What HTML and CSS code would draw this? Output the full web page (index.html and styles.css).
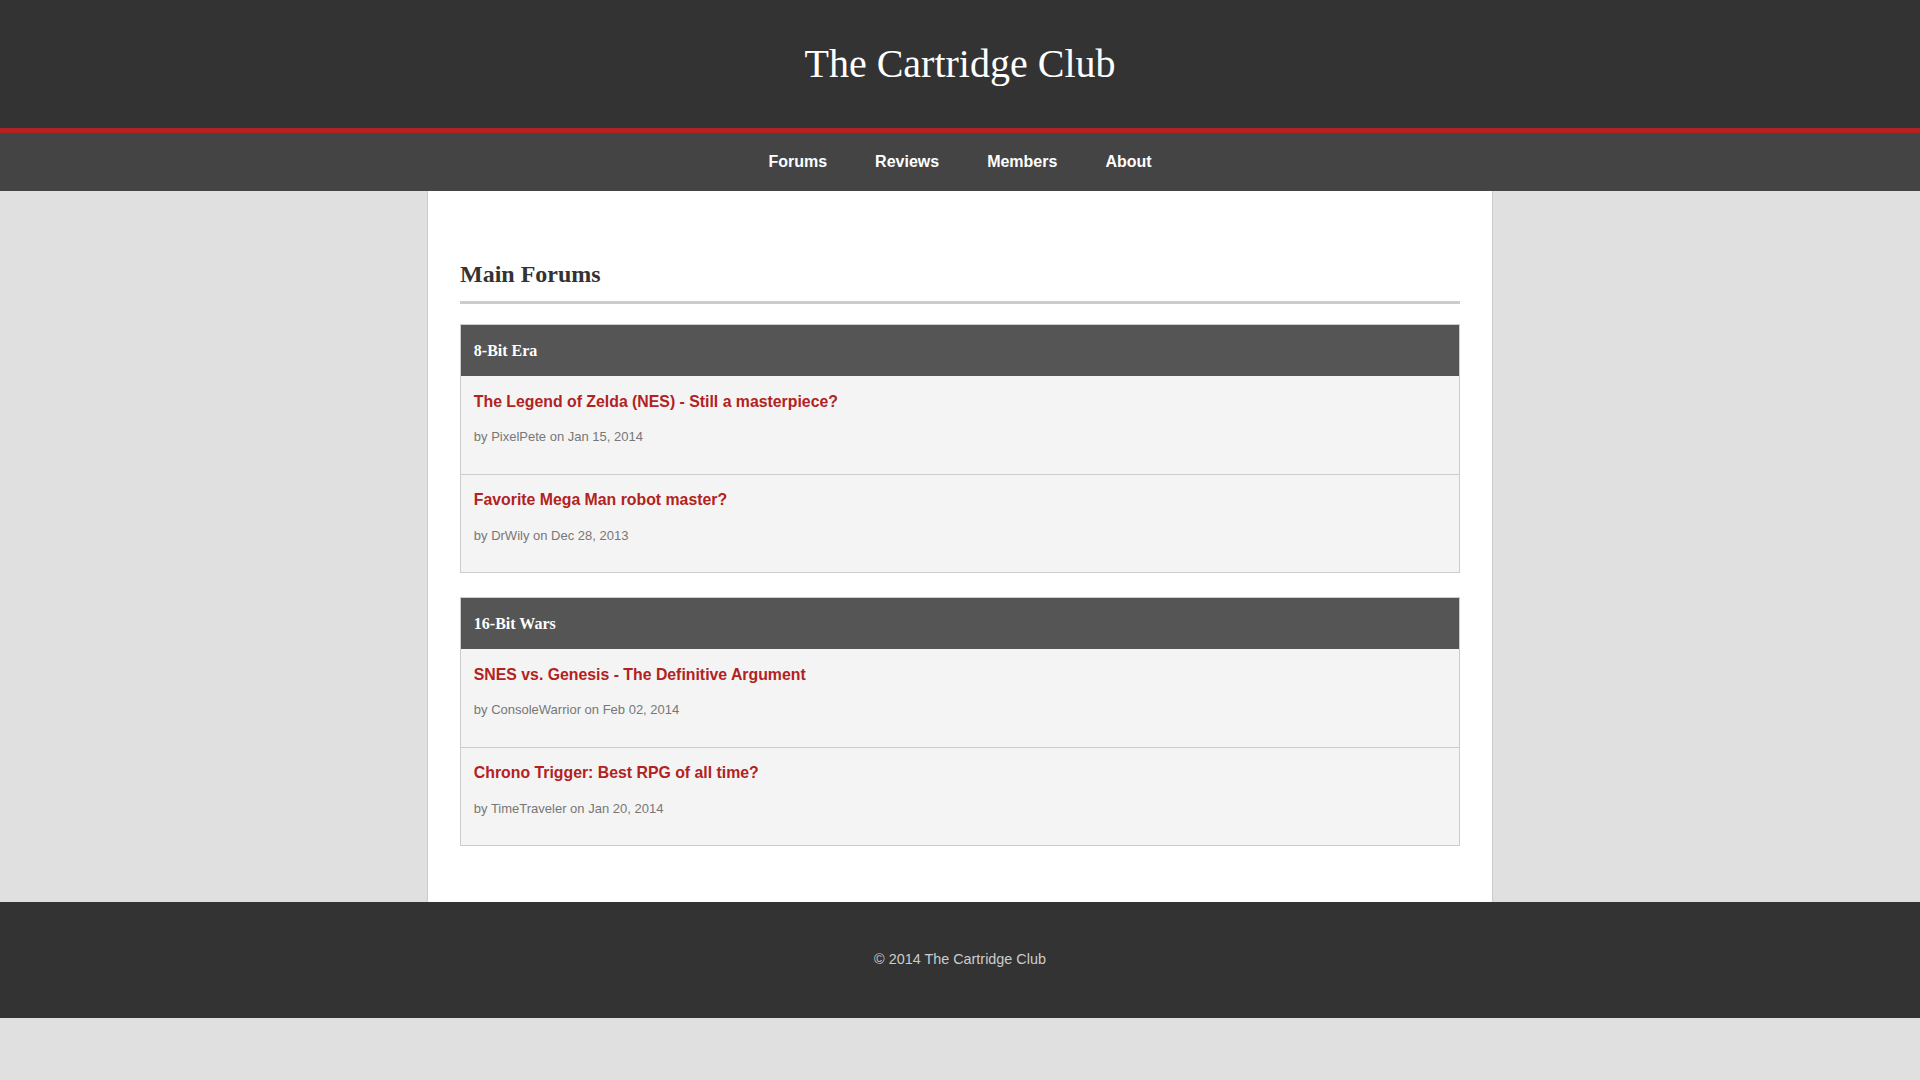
FILE: index.html
```html
<!DOCTYPE html>
<html lang="en">
<head>
<meta charset="utf-8">
<title>The Cartridge Club</title>
<link rel="stylesheet" href="styles.css">
</head>
<body>
<header class="site-header">
  <h1 class="site-title">The Cartridge Club</h1>
</header>
<nav class="site-nav">
  <a href="#" class="nav-link">Forums</a>
  <a href="#" class="nav-link">Reviews</a>
  <a href="#" class="nav-link">Members</a>
  <a href="#" class="nav-link">About</a>
</nav>
<main class="container">
  <h2 class="page-title">Main Forums</h2>

  <section class="forum">
    <h3 class="forum-name">8-Bit Era</h3>
    <div class="topic">
      <a href="#" class="topic-title">The Legend of Zelda (NES) - Still a masterpiece?</a>
      <p class="topic-meta">by PixelPete on Jan 15, 2014</p>
    </div>
    <div class="topic">
      <a href="#" class="topic-title">Favorite Mega Man robot master?</a>
      <p class="topic-meta">by DrWily on Dec 28, 2013</p>
    </div>
  </section>

  <section class="forum">
    <h3 class="forum-name">16-Bit Wars</h3>
    <div class="topic">
      <a href="#" class="topic-title">SNES vs. Genesis - The Definitive Argument</a>
      <p class="topic-meta">by ConsoleWarrior on Feb 02, 2014</p>
    </div>
    <div class="topic">
      <a href="#" class="topic-title">Chrono Trigger: Best RPG of all time?</a>
      <p class="topic-meta">by TimeTraveler on Jan 20, 2014</p>
    </div>
  </section>
</main>
<footer class="site-footer">
  <p class="footer-text">&copy; 2014 The Cartridge Club</p>
</footer>
</body>
</html>
```
FILE: styles.css
```css
html, body {
  margin: 0;
  padding: 0;
}
body {
  background: #e0e0e0;
  font-family: "Liberation Sans", Arial, sans-serif;
  font-size: 16px;
  line-height: 1.6;
  color: #333;
}
.site-header {
  background: #333;
  padding: 32px 0;
  border-bottom: 5px solid #b22222;
  text-align: center;
}
.site-title {
  margin: 0;
  font-family: "Liberation Serif", "Times New Roman", serif;
  font-size: 40px;
  font-weight: normal;
  line-height: 1.6;
  color: #fff;
}
.site-nav {
  background: #444;
  padding: 16px 0;
  display: flex;
  justify-content: center;
  gap: 48px;
}
.nav-link {
  color: #fff;
  font-weight: bold;
  text-decoration: none;
}
.container {
  max-width: 1000px;
  margin: 0 auto;
  padding: 32px;
  background: #fff;
  border-left: 1px solid #ccc;
  border-right: 1px solid #ccc;
}
.page-title {
  margin: 32px 0 20px;
  padding-bottom: 8px;
  border-bottom: 3px solid #ccc;
  font-family: "Liberation Serif", "Times New Roman", serif;
  font-size: 24px;
  font-weight: bold;
  color: #333;
}
.forum {
  border: 1px solid #ccc;
  margin-bottom: 24px;
}
.forum-name {
  margin: 0;
  padding: 12.8px;
  background: #555;
  color: #fff;
  font-family: "Liberation Serif", "Times New Roman", serif;
  font-size: 16px;
  font-weight: bold;
}
.topic {
  background: #f4f4f4;
  padding: 12.8px;
  border-bottom: 1px solid #ccc;
}
.topic:last-child {
  border-bottom: none;
}
.topic-title {
  display: block;
  color: #b22222;
  font-size: 15.84px;
  font-weight: bold;
  text-decoration: none;
}
.topic-meta {
  margin: 12.9px 0;
  font-size: 13px;
  line-height: 20.7px;
  color: #777;
}
.site-footer {
  background: #333;
  padding: 32px 0;
  text-align: center;
}
.footer-text {
  margin: 14.4px 0;
  font-size: 14.4px;
  color: #ccc;
}
```
